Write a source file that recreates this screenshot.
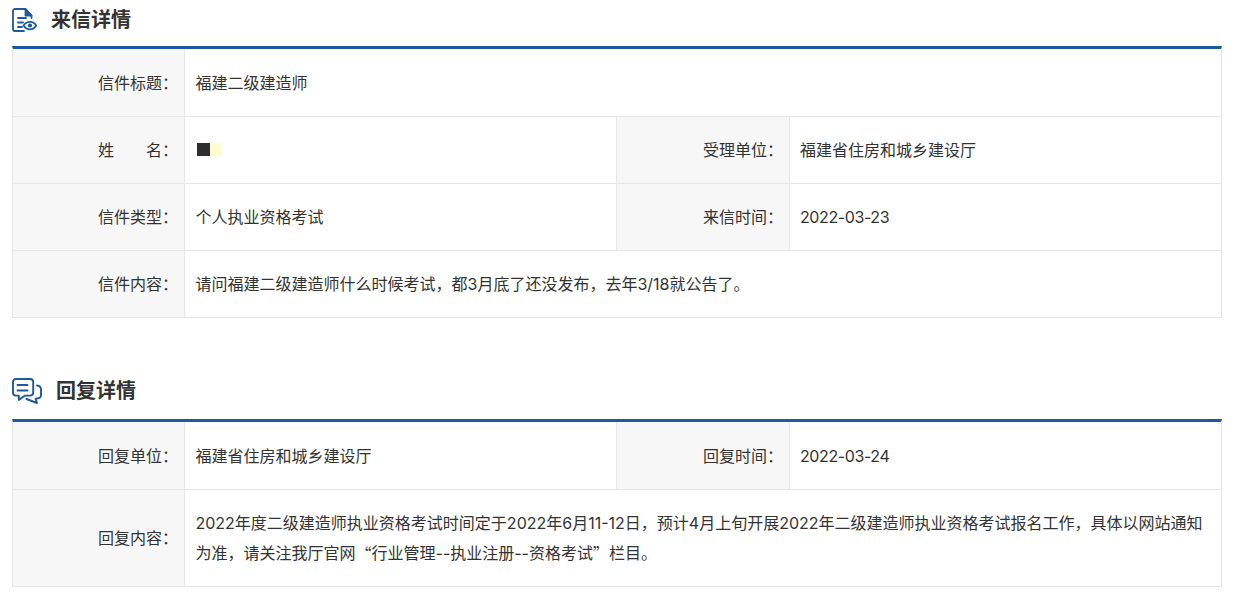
<template>
  <div class="page">
    <section class="block first">
      <header class="head">
        <svg class="icon" width="25" height="24" viewBox="0 0 25 24" fill="none" stroke="#1f5a9e" stroke-width="1.8" stroke-linecap="round" stroke-linejoin="round">
          <path d="M19.5 10V7.5L13.5 1H3C1.9 1 1 1.9 1 3V21C1 22.1 1.9 23 3 23H12" />
          <path d="M13.5 1V7.5H19.5Z" fill="#1f5a9e" />
          <path d="M6 10H14M6 14.5H11M6 19H10" />
          <path d="M11.5 17.5C13.2 15 15.4 13.8 18 13.8S22.8 15 24.3 17.5C22.8 20 20.6 21.4 18 21.4S13.2 20 11.5 17.5Z" />
          <circle cx="18" cy="17.5" r="2.1" fill="#1f5a9e" stroke="none" />
        </svg>
        <h2 class="title">来信详情</h2>
      </header>
      <div class="table">
        <div class="row lead">
          <div class="label">信件标题：</div>
          <div class="value">福建二级建造师</div>
        </div>
        <div class="row">
          <div class="label">姓　　名：</div>
          <div class="value half"><span class="mask dark"></span><span class="mask pale"></span></div>
          <div class="label mid">受理单位：</div>
          <div class="value half">福建省住房和城乡建设厅</div>
        </div>
        <div class="row">
          <div class="label">信件类型：</div>
          <div class="value half">个人执业资格考试</div>
          <div class="label mid">来信时间：</div>
          <div class="value half date">2022-03-23</div>
        </div>
        <div class="row">
          <div class="label">信件内容：</div>
          <div class="value">请问福建二级建造师什么时候考试，都3月底了还没发布，去年3/18就公告了。</div>
        </div>
      </div>
    </section>

    <section class="block second">
      <header class="head">
        <svg class="icon" width="30" height="26" viewBox="0 0 30 26" fill="none" stroke="#1f5a9e" stroke-width="1.9" stroke-linecap="round" stroke-linejoin="round">
          <path d="M4 1H18C20 1 21.2 2.2 21.2 4V14.5C21.2 16.4 20 17.6 18 17.6H13L6.8 22V17.6H4C2 17.6 1 16.4 1 14.5V4C1 2.2 2 1 4 1Z" />
          <path d="M5.5 7H15.5M5.5 12.5H15.5" />
          <path d="M25 7.5C27.6 7.8 29 9.4 29 11.5V17.5C29 19.5 27.4 20.6 23.6 20.6L25 25L14.5 21" />
        </svg>
        <h2 class="title">回复详情</h2>
      </header>
      <div class="table">
        <div class="row lead">
          <div class="label">回复单位：</div>
          <div class="value half">福建省住房和城乡建设厅</div>
          <div class="label mid">回复时间：</div>
          <div class="value half date">2022-03-24</div>
        </div>
        <div class="row tall">
          <div class="label">回复内容：</div>
          <div class="value para">
            <div class="line">2022年度二级建造师执业资格考试时间定于2022年6月11-12日，预计4月上旬开展2022年二级建造师执业资格考试报名工作，具体以网站通知</div>
            <div class="line">
              <span>为准，请关注我厅官网</span><span class="cjk">“</span><span>行业管理--执业注册--资格考试</span><span class="cjk">”</span><span>栏目。</span>
            </div>
          </div>
        </div>
      </div>
    </section>
  </div>
</template>

<style scoped>
.page {
  width: 1210px;
  margin-left: 12px;
  padding-top: 8px;
  font-family: "Inter", "Noto Sans CJK SC", sans-serif;
  font-size: 16px;
  color: #333;
}
.block.second {
  margin-top: 60px;
}
.head {
  display: flex;
  align-items: center;
  box-sizing: border-box;
}
.first .head {
  height: 38px;
  padding-bottom: 14px;
}
.second .head {
  height: 41px;
  padding-bottom: 15px;
}
.icon {
  flex: none;
  display: block;
}
.title {
  margin: 0 0 2px 14px;
  font-family: "Noto Sans CJK SC", sans-serif;
  font-size: 20px;
  line-height: 24px;
  font-weight: 700;
  color: #333;
}
.table {
  border-top: 3px solid #1f5aa0;
  border-left: 1px solid #e6e6e6;
  border-right: 1px solid #e6e6e6;
}
.row {
  display: flex;
  min-height: 67px;
  box-sizing: border-box;
  border-bottom: 1px solid #e6e6e6;
}
.row.lead {
  min-height: 68px;
}
.row.tall {
  min-height: 97px;
}
.label {
  flex: none;
  width: 172px;
  box-sizing: border-box;
  display: flex;
  align-items: center;
  justify-content: flex-end;
  padding-right: 6px;
  line-height: 30px;
  background: #f7f7f7;
  border-right: 1px solid #e6e6e6;
  white-space: nowrap;
}
.label.mid {
  width: 174px;
  border-left: 1px solid #e6e6e6;
}
.value {
  flex: 1;
  min-width: 0;
  box-sizing: border-box;
  display: flex;
  align-items: center;
  padding: 0 12px 0 10.5px;
  line-height: 30px;
}
.value.half {
  flex: 0 0 431px;
}
.row .value.half:last-child {
  flex: 1 1 0;
  padding-left: 10px;
}
.date {
  letter-spacing: -0.4px;
}
.para {
  display: flex;
  flex-direction: column;
  align-items: flex-start;
  justify-content: center;
}
.line {
  display: flex;
  height: 30px;
  white-space: nowrap;
}
.cjk {
  font-family: "Noto Sans CJK SC", sans-serif;
}
.mask {
  display: inline-block;
  height: 13px;
  margin-bottom: 2px;
}
.dark {
  width: 13px;
  margin-left: 1.5px;
  background: #2e2e2e;
}
.pale {
  width: 12px;
  background: #fdfdd0;
}
</style>

<style>
html, body {
  margin: 0;
  background: #fff;
}
</style>
